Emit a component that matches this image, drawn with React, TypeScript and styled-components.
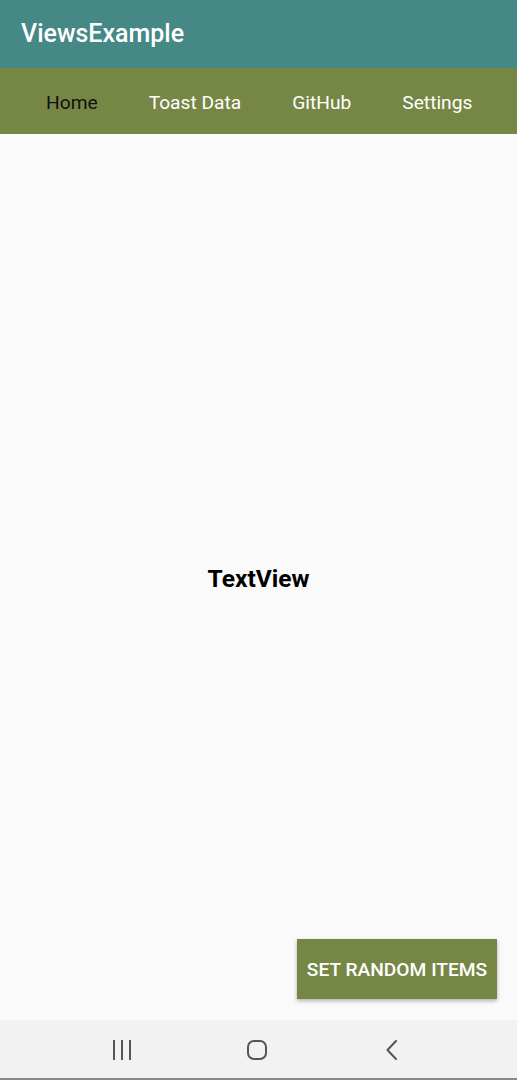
import React from "react";
import styled, { createGlobalStyle } from "styled-components";

const Global = createGlobalStyle`
  html, body { margin: 0; padding: 0; }
  body { font-family: Roboto, "Noto Sans", sans-serif; background: #fafafa; }
`;

const Screen = styled.div`
  width: 517px;
  height: 1080px;
  display: flex;
  flex-direction: column;
  background: #fafafa;
  overflow: hidden;
`;

const AppBar = styled.header`
  height: 68px;
  flex: none;
  background: #458886;
  display: flex;
  align-items: center;
  padding-left: 21px;
  padding-bottom: 1px;
  box-sizing: border-box;
`;

const Title = styled.h1`
  margin: 0;
  font-family: Roboto, sans-serif;
  font-weight: 500;
  font-size: 25px;
  color: #ffffff;
`;

const TabBar = styled.nav`
  height: 66px;
  flex: none;
  background: #768745;
  display: flex;
  align-items: center;
  gap: 51px;
  padding-left: 46px;
  padding-top: 3px;
  box-sizing: border-box;
`;

const Tab = styled.span<{ $active?: boolean }>`
  font-family: Roboto, sans-serif;
  font-size: 19.2px;
  color: ${(p) => (p.$active ? "#111111" : "#ffffff")};
`;

const Content = styled.main`
  flex: 1;
  position: relative;
  display: flex;
  align-items: center;
  justify-content: center;
  padding-top: 2px;
`;

const Label = styled.div`
  font-family: Roboto, sans-serif;
  font-weight: 700;
  font-size: 24.5px;
  color: #000;
`;

const ActionButton = styled.button`
  position: absolute;
  right: 20px;
  bottom: 21px;
  width: 200px;
  height: 60px;
  border: none;
  background: #768745;
  color: #fff;
  font-family: Roboto, sans-serif;
  font-weight: 500;
  font-size: 19.2px;
  text-transform: uppercase;
  box-shadow: 0 2px 4px rgba(0, 0, 0, 0.3);
  padding: 0;
`;

const NavBar = styled.footer`
  height: 58px;
  flex: none;
  background: #f2f2f2;
  border-bottom: 2px solid #8a8a8a;
  position: relative;
`;

const NavIcon = styled.div<{ $left: number }>`
  position: absolute;
  left: ${(p) => p.$left}px;
  top: 20px;
  width: 20px;
  height: 20px;
  display: flex;
`;

export default function App() {
  return (
    <>
      <Global />
      <Screen>
        <AppBar>
          <Title>ViewsExample</Title>
        </AppBar>
        <TabBar>
          <Tab $active>Home</Tab>
          <Tab>Toast Data</Tab>
          <Tab>GitHub</Tab>
          <Tab>Settings</Tab>
        </TabBar>
        <Content>
          <Label>TextView</Label>
          <ActionButton>Set Random Items</ActionButton>
        </Content>
        <NavBar>
          <NavIcon $left={112}>
            <svg width="20" height="20" viewBox="0 0 20 20">
              <rect x="1" y="0" width="2" height="20" fill="#555" />
              <rect x="9" y="0" width="2" height="20" fill="#555" />
              <rect x="17" y="0" width="2" height="20" fill="#555" />
            </svg>
          </NavIcon>
          <NavIcon $left={247}>
            <svg width="20" height="20" viewBox="0 0 20 20">
              <rect x="1" y="1" width="18" height="18" rx="6" fill="none" stroke="#555" strokeWidth="2" />
            </svg>
          </NavIcon>
          <NavIcon $left={383}>
            <svg width="20" height="20" viewBox="0 0 20 20">
              <path d="M13 1 L4.5 10 L13 19" fill="none" stroke="#555" strokeWidth="2" strokeLinecap="round" strokeLinejoin="round" />
            </svg>
          </NavIcon>
        </NavBar>
      </Screen>
    </>
  );
}
